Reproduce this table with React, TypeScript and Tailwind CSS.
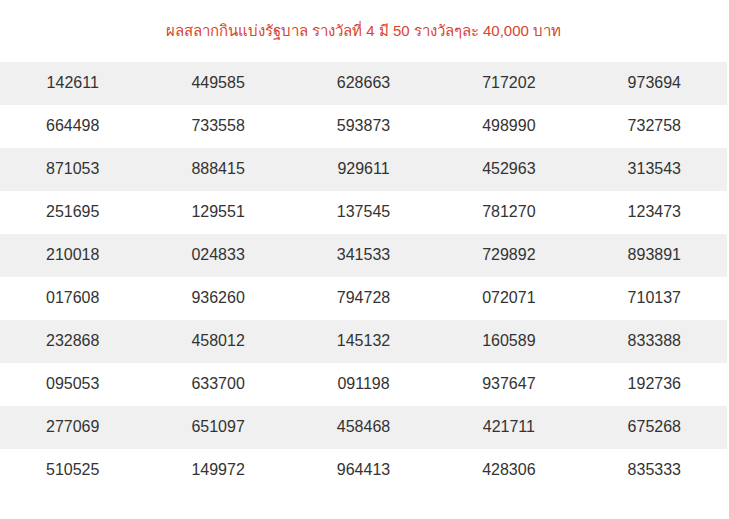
const rows: string[][] = [
  ['142611', '449585', '628663', '717202', '973694'],
  ['664498', '733558', '593873', '498990', '732758'],
  ['871053', '888415', '929611', '452963', '313543'],
  ['251695', '129551', '137545', '781270', '123473'],
  ['210018', '024833', '341533', '729892', '893891'],
  ['017608', '936260', '794728', '072071', '710137'],
  ['232868', '458012', '145132', '160589', '833388'],
  ['095053', '633700', '091198', '937647', '192736'],
  ['277069', '651097', '458468', '421711', '675268'],
  ['510525', '149972', '964413', '428306', '835333'],
];

export default function App() {
  return (
    <div className="w-[729px] min-h-[519px] bg-white font-['Liberation_Sans',Arial,sans-serif]">
      <div className="w-[727px]">
        <div className="h-[62px] flex items-center justify-center text-[15px] text-[#d9432f]">
          ผลสลากกินแบ่งรัฐบาล รางวัลที่ 4 มี 50 รางวัลๆละ 40,000 บาท
        </div>
        <table className="w-full border-collapse table-fixed">
          <tbody>
            {rows.map((row, i) => (
              <tr key={i} className={i % 2 === 0 ? 'bg-[#f0f0f0]' : 'bg-white'}>
                {row.map((n, j) => (
                  <td key={j} className="h-[43px] p-0 pb-[2px] text-center align-middle text-[16px] text-[#333333]">
                    {n}
                  </td>
                ))}
              </tr>
            ))}
          </tbody>
        </table>
      </div>
    </div>
  );
}
